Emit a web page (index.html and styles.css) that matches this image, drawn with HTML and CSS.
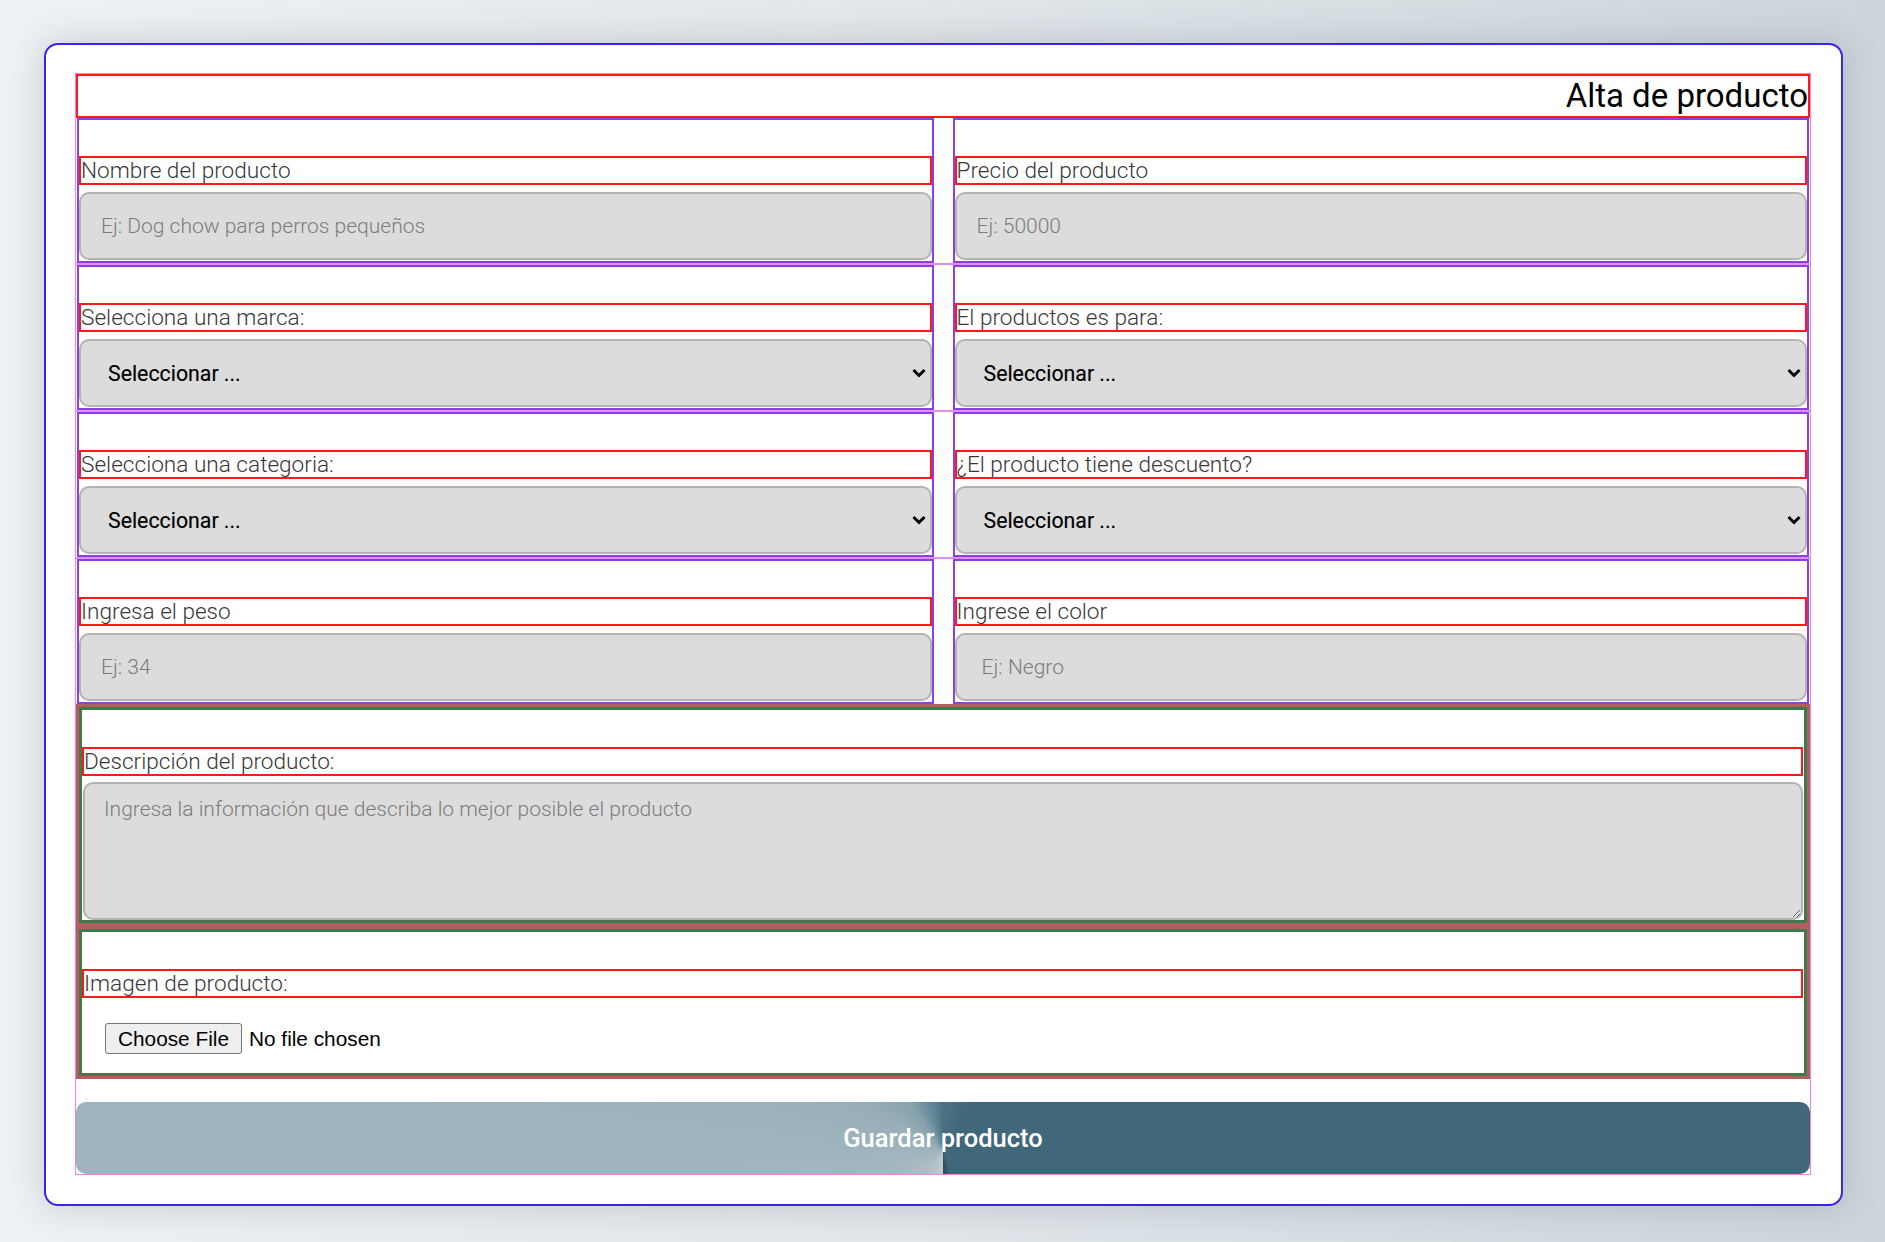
FILE: index.html
```html
<!DOCTYPE html>
<html lang="es">
<head>
<meta charset="utf-8">
<title>Alta de producto</title>
<link rel="stylesheet" href="styles.css">
</head>
<body>
<main class="card">
  <form class="form">
    <h1 class="title">Alta de producto</h1>

    <div class="row">
      <div class="field">
        <label class="label">Nombre del producto</label>
        <input class="control" type="text" placeholder="Ej: Dog chow para perros pequeños">
      </div>
      <div class="field">
        <label class="label">Precio del producto</label>
        <input class="control" type="text" placeholder="Ej: 50000">
      </div>
    </div>

    <div class="row">
      <div class="field">
        <label class="label">Selecciona una marca:</label>
        <div class="select-wrap">
          <select class="control select"><option>Seleccionar ...</option></select>
          <svg class="chev" width="14" height="10" viewBox="0 0 14 10"><polyline points="1.5,2 7,7.5 12.5,2" fill="none" stroke="#000" stroke-width="3"/></svg>
        </div>
      </div>
      <div class="field">
        <label class="label">El productos es para:</label>
        <div class="select-wrap">
          <select class="control select"><option>Seleccionar ...</option></select>
          <svg class="chev" width="14" height="10" viewBox="0 0 14 10"><polyline points="1.5,2 7,7.5 12.5,2" fill="none" stroke="#000" stroke-width="3"/></svg>
        </div>
      </div>
    </div>

    <div class="row">
      <div class="field">
        <label class="label">Selecciona una categoria:</label>
        <div class="select-wrap">
          <select class="control select"><option>Seleccionar ...</option></select>
          <svg class="chev" width="14" height="10" viewBox="0 0 14 10"><polyline points="1.5,2 7,7.5 12.5,2" fill="none" stroke="#000" stroke-width="3"/></svg>
        </div>
      </div>
      <div class="field">
        <label class="label">¿El producto tiene descuento?</label>
        <div class="select-wrap">
          <select class="control select"><option>Seleccionar ...</option></select>
          <svg class="chev" width="14" height="10" viewBox="0 0 14 10"><polyline points="1.5,2 7,7.5 12.5,2" fill="none" stroke="#000" stroke-width="3"/></svg>
        </div>
      </div>
    </div>

    <div class="row row-last">
      <div class="field">
        <label class="label">Ingresa el peso</label>
        <input class="control" type="text" placeholder="Ej: 34">
      </div>
      <div class="field">
        <label class="label">Ingrese el color</label>
        <input class="control" type="text" placeholder=" Ej: Negro">
      </div>
    </div>

    <div class="section">
      <div class="section-inner">
        <label class="label">Descripción del producto:</label>
        <textarea class="control area" placeholder="Ingresa la información que describa lo mejor posible el producto"></textarea>
      </div>
    </div>

    <div class="section">
      <div class="section-inner">
        <label class="label">Imagen de producto:</label>
        <input class="file" type="file">
      </div>
    </div>

    <button class="submit" type="button">Guardar producto</button>
  </form>
</main>
</body>
</html>
```

FILE: styles.css
```css
* {
  box-sizing: border-box;
}

html, body {
  margin: 0;
  padding: 0;
}

body {
  width: 1885px;
  height: 1242px;
  padding: 43px 42px 0 44px;
  background: linear-gradient(90deg, #eef2f4 0%, #e2e8eb 45%, #ccd6da 100%);
  font-family: Roboto, "Noto Sans", sans-serif;
  overflow: hidden;
}

.card {
  background: #fff;
  border: 2px solid #3a22f5;
  border-radius: 14px;
  padding: 28px 30px 29px 29px;
  box-shadow: 0 0 36px rgba(60, 70, 80, 0.22);
}

.form {
  border: 1px solid #ee82ee;
  display: flex;
  flex-direction: column;
}

.title {
  margin: 0;
  border: 2px solid #ff1a1a;
  height: 44px;
  font-size: 33px;
  font-weight: 400;
  line-height: 40px;
  text-align: right;
  color: #000;
}

.row {
  display: grid;
  grid-template-columns: 1fr 1fr;
  column-gap: 19px;
  padding: 0 1px;
  border-bottom: 2px solid #e38cf0;
}

.row-last {
  border-bottom: none;
}

.field {
  border: 2px solid #8d3fe6;
  padding: 36px 0 1px 0;
  height: 145px;
  display: flex;
  flex-direction: column;
  gap: 7px;
}

.label {
  display: block;
  border: 2px solid #ff1a1a;
  height: 29px;
  font-size: 22.6px;
  font-weight: 300;
  line-height: 25px;
  color: #383838;
  white-space: nowrap;
}

.control {
  display: block;
  width: 100%;
  height: 68px;
  margin: 0;
  background: #dcdcdc;
  border: 2px solid #b3b3b3;
  border-radius: 10px;
  padding: 0 20px;
  font-family: Roboto, "Noto Sans", sans-serif;
  font-size: 21px;
  font-weight: 300;
  color: #222;
  outline: none;
}

.control::placeholder {
  color: #7c7c7c;
  opacity: 1;
}

.select-wrap {
  position: relative;
}

.select {
  appearance: none;
  -webkit-appearance: none;
  padding-left: 27px;
  font-size: 21.3px;
  font-weight: 400;
  color: #000;
  -webkit-text-stroke: 0.15px #000;
}

.chev {
  position: absolute;
  right: 6px;
  top: 29px;
}

.section {
  border: 3px solid #b35d5d;
}

.section-inner {
  border: 3px solid #3d7a4e;
  padding: 37px 1px 0 0;
  display: flex;
  flex-direction: column;
}

.area {
  height: 138px;
  margin-top: 6px;
  margin-left: 1px;
  padding: 12px 19px;
  line-height: 26px;
  resize: both;
  width: calc(100% - 1px);
}

.file {
  display: block;
  padding: 25px 20px 19px 23px;
  font-family: "Liberation Sans", Arial, sans-serif;
  font-size: 20.8px;
  color: #000;
}

.file::file-selector-button {
  font-family: "Liberation Sans", Arial, sans-serif;
  font-size: 20.8px;
  height: 31px;
  padding: 0 12px;
  margin-right: 7px;
  background: #efefef;
  border: 1px solid #767676;
  border-radius: 3px;
  color: #000;
}

.submit {
  margin-top: 23px;
  height: 72px;
  width: 100%;
  border: none;
  border-radius: 10px;
  color: #fff;
  font-family: Roboto, "Noto Sans", sans-serif;
  font-size: 25.5px;
  font-weight: 500;
  background: conic-gradient(from 0deg at 50% 68%,
    #4b7182 0deg,
    #41687a 35deg,
    #41687a 160deg,
    #2c4755 180deg,
    #c0cbcf 180deg,
    #abbdc4 225deg,
    #a0b5bd 265deg,
    #97aeb8 300deg,
    #86a2ad 325deg,
    #5d8394 348deg,
    #4b7182 360deg);
}
```
